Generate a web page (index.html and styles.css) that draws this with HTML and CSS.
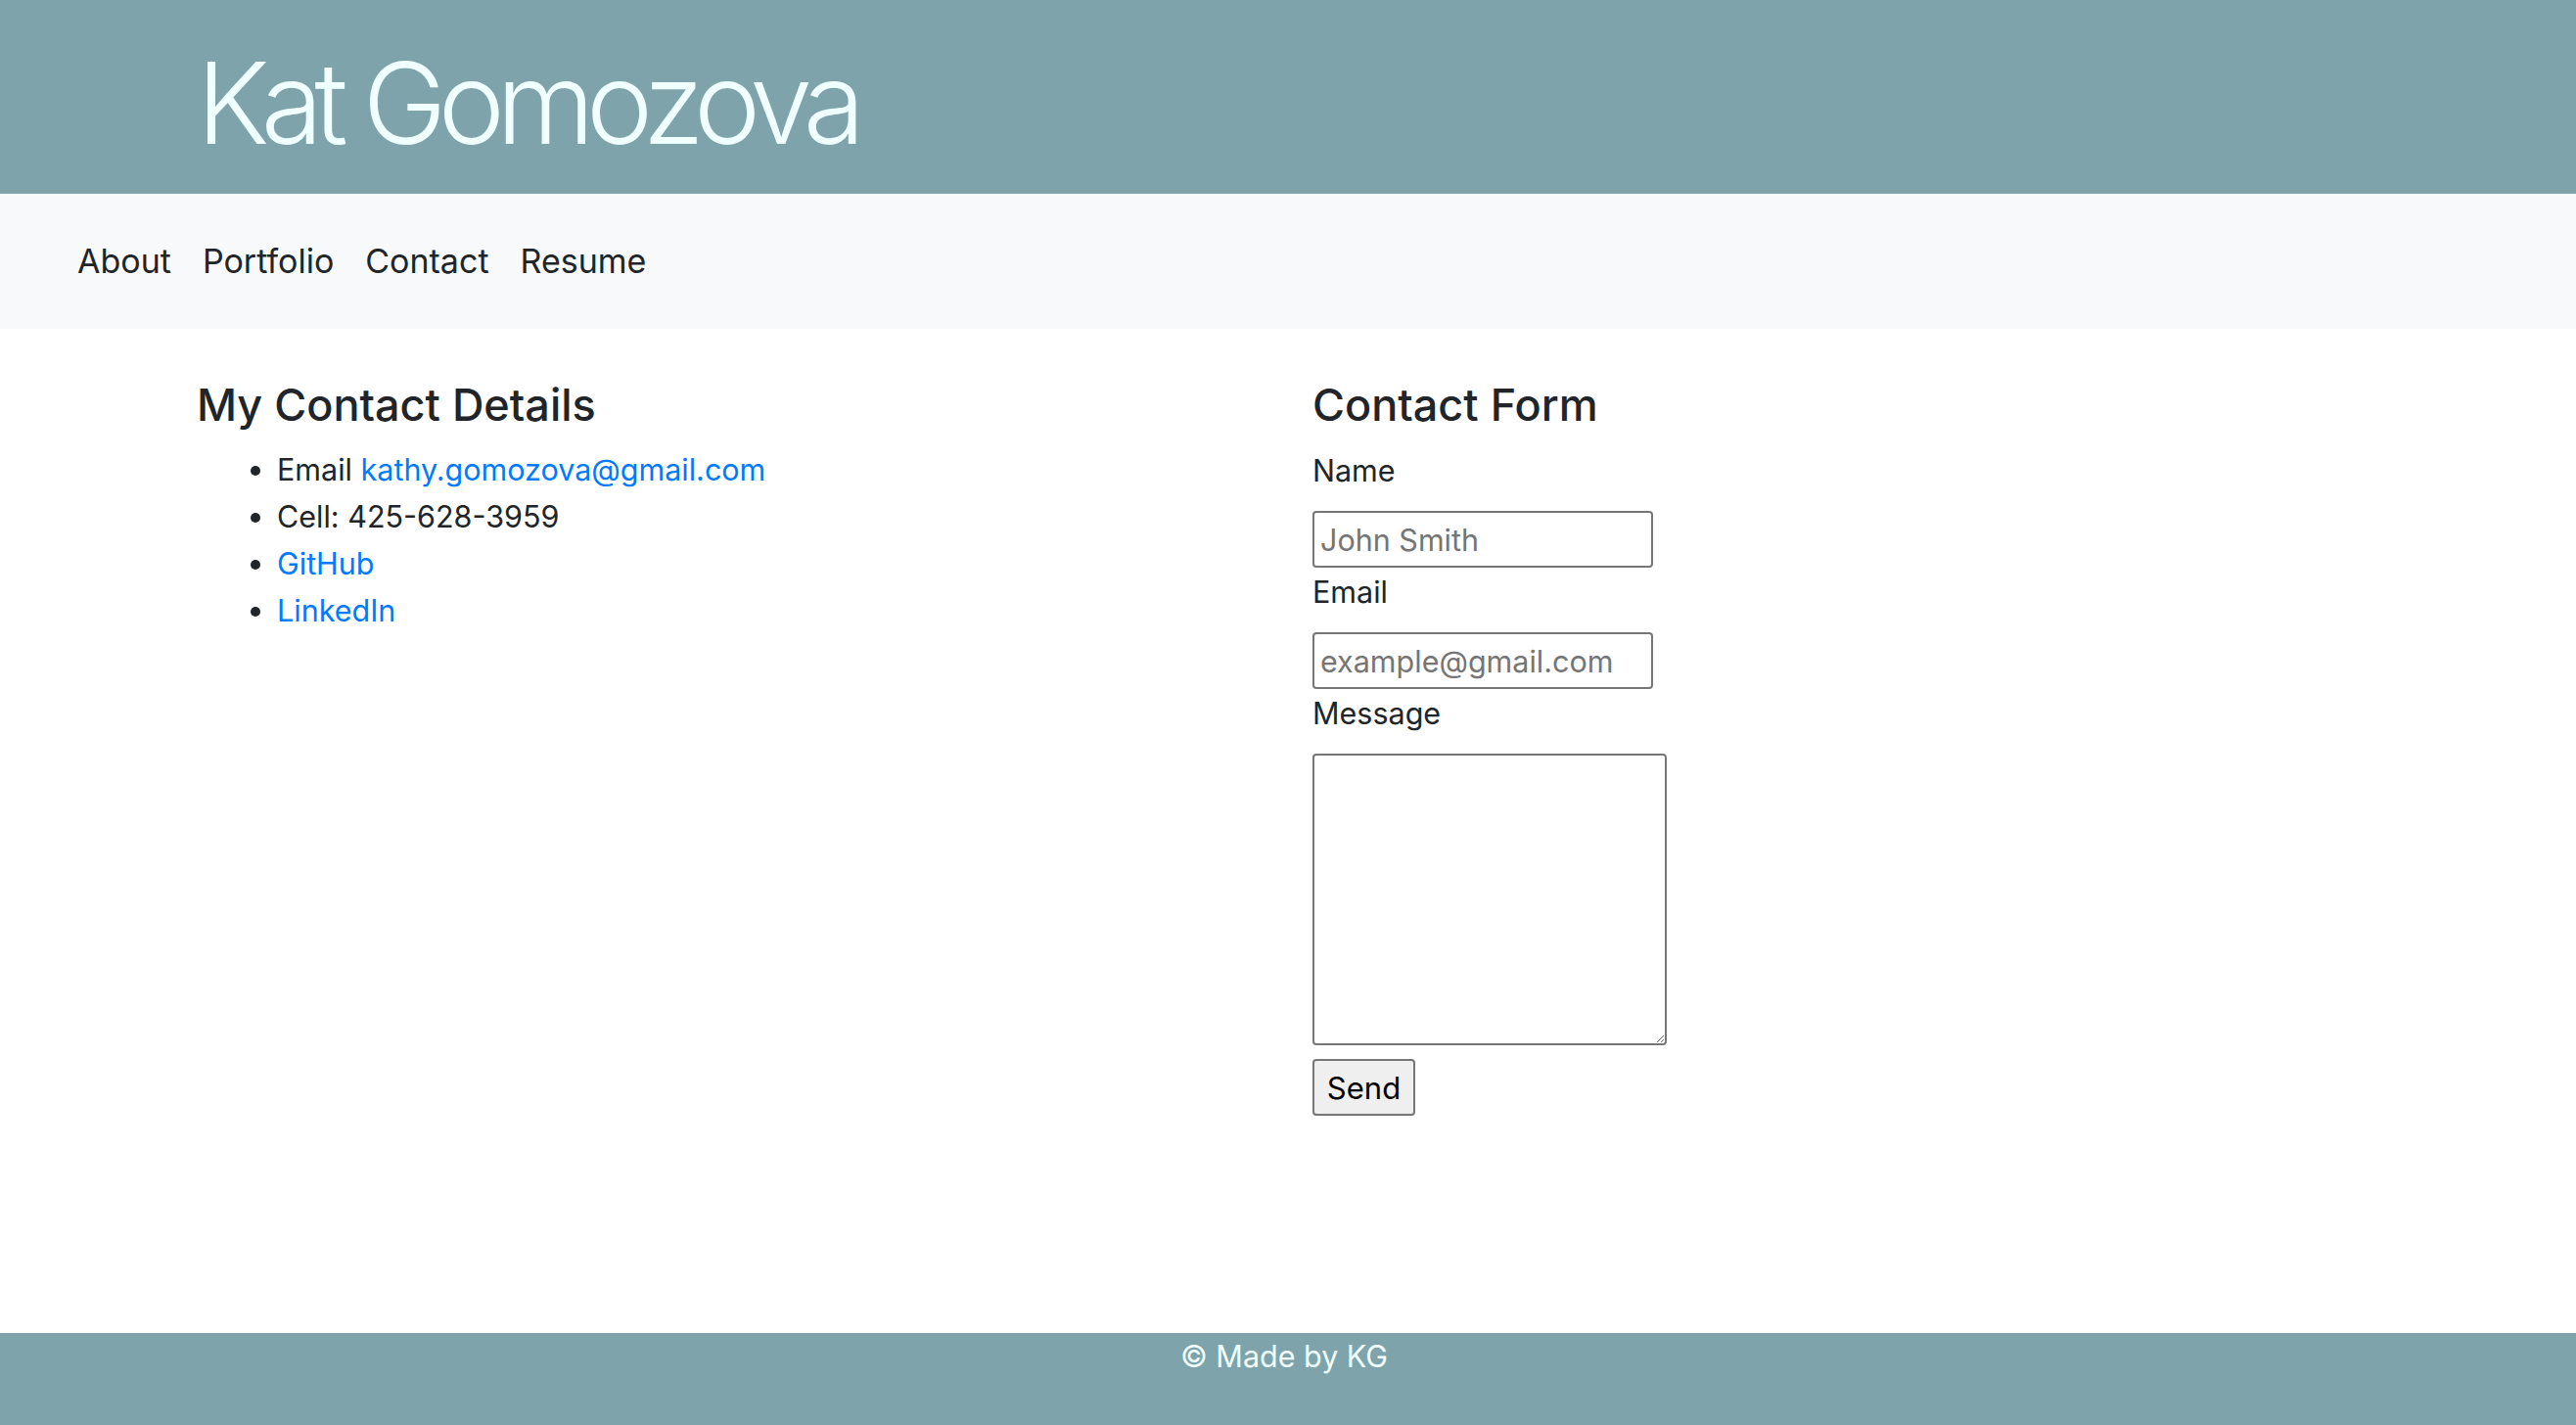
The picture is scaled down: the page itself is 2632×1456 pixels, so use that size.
FILE: index.html
```html
<!DOCTYPE html>
<html lang="en">
<head>
<meta charset="utf-8">
<title>Kat Gomozova</title>
<link rel="stylesheet" href="styles.css">
</head>
<body>
<div class="page">
  <header class="site-header">
    <h1 class="site-title">Kat Gomozova</h1>
  </header>
  <nav class="site-nav">
    <a class="nav-link" href="#">About</a>
    <a class="nav-link" href="#">Portfolio</a>
    <a class="nav-link" href="#">Contact</a>
    <a class="nav-link" href="#">Resume</a>
  </nav>
  <main class="content">
    <section class="col">
      <h3 class="section-title">My Contact Details</h3>
      <ul class="details">
        <li>Email <a href="#">kathy.gomozova@gmail.com</a></li>
        <li>Cell: 425-628-3959</li>
        <li><a href="#">GitHub</a></li>
        <li><a href="#">LinkedIn</a></li>
      </ul>
    </section>
    <section class="col">
      <h3 class="section-title">Contact Form</h3>
      <form class="form">
        <label class="label" for="name">Name</label>
        <input class="field" id="name" type="text" placeholder="John Smith">
        <label class="label" for="email">Email</label>
        <input class="field" id="email" type="email" placeholder="example@gmail.com">
        <label class="label" for="msg">Message</label>
        <textarea class="area" id="msg"></textarea>
        <button class="send" type="button">Send</button>
      </form>
    </section>
  </main>
  <footer class="site-footer">© Made by KG</footer>
</div>
</body>
</html>
```
FILE: styles.css
```css
html, body {
  margin: 0;
  padding: 0;
}
body {
  font-family: Inter, "Noto Sans", sans-serif;
  font-size: 30.5px;
  line-height: 48px;
  color: #212529;
  background: #fff;
}
.page {
  min-height: 100vh;
  display: flex;
  flex-direction: column;
}
.site-header {
  background: #7ea3aa;
  height: 198px;
  box-sizing: border-box;
  padding: 14px 0 0 201px;
  display: flex;
  align-items: center;
}
.site-title {
  margin: 0;
  font-size: 115px;
  font-weight: 300;
  line-height: 1.2;
  color: #f0ffff;
  letter-spacing: -8.6px;
}
.site-nav {
  background: #f8f9fa;
  height: 138px;
  box-sizing: border-box;
  display: flex;
  align-items: center;
  padding-left: 63px;
  font-size: 34px;
}
.nav-link {
  color: #212529;
  text-decoration: none;
  padding: 0 16px;
}
.content {
  flex: 1;
  display: grid;
  grid-template-columns: 1140px 1140px;
  padding: 51px 0 0 201px;
}
.section-title {
  margin: 0 0 15px;
  font-size: 45px;
  font-weight: 500;
  line-height: 1.2;
}
.details {
  margin: 0;
  padding-left: 82px;
}
.details a {
  color: #007bff;
  text-decoration: none;
}
.form {
  display: flex;
  flex-direction: column;
  align-items: flex-start;
}
.label {
  display: block;
  margin-top: 1px;
}
.field {
  margin-top: 17px;
  width: 348px;
  height: 58px;
  box-sizing: border-box;
  border: 2px solid #767676;
  border-radius: 4px;
  padding: 0 6px;
  font-family: Inter, "Noto Sans", sans-serif;
  font-size: 30.5px;
  color: #212529;
}
.field::placeholder {
  color: #757575;
}
.area {
  margin-top: 17px;
  width: 362px;
  height: 298px;
  box-sizing: border-box;
  border: 2px solid #767676;
  border-radius: 4px;
  font-family: Inter, "Noto Sans", sans-serif;
  font-size: 30.5px;
}
.send {
  margin-top: 14px;
  width: 105px;
  height: 58px;
  box-sizing: border-box;
  border: 2px solid #767676;
  border-radius: 4px;
  background: #efefef;
  color: #000;
  font-family: Inter, "Noto Sans", sans-serif;
  font-size: 31px;
  padding: 0;
}
.site-footer {
  background: #7ea3aa;
  height: 94px;
  color: #f0ffff;
  text-align: center;
  box-sizing: border-box;
  padding: 0 8px 0 0;
}
```
